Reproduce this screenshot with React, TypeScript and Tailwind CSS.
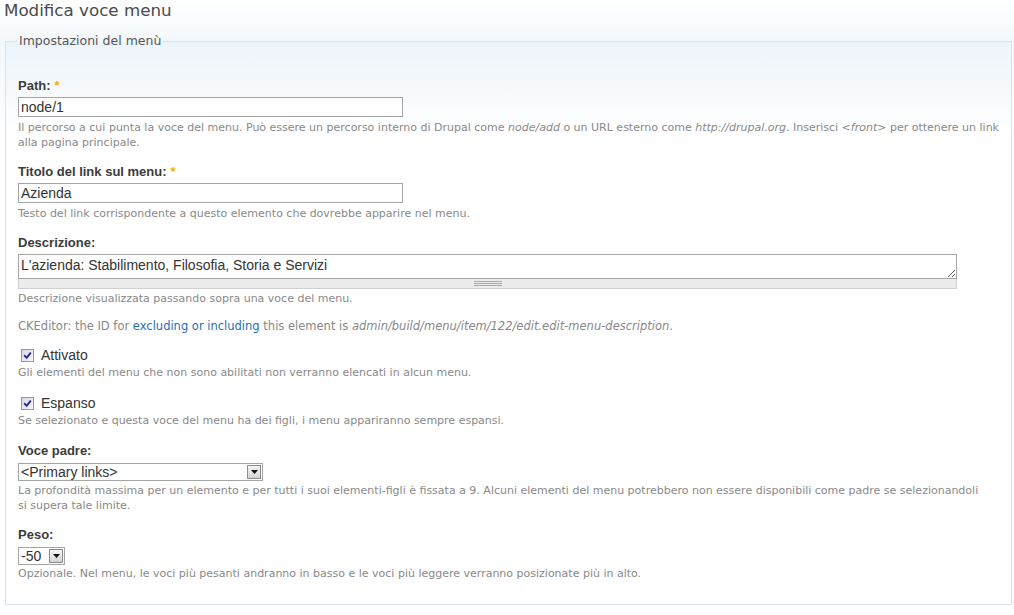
import React from 'react';

const descCls = "font-['DejaVu_Sans',Verdana,sans-serif] text-[11px] leading-[15px] text-[#898989]";
const labelCls = "block font-['Liberation_Sans',Arial,sans-serif] font-bold text-[13px] leading-[16px] text-[#3b3b3b]";
const inputCls =
  "block h-[20px] border border-[#a5a5a5] bg-white px-[2px] font-['Liberation_Sans',Arial,sans-serif] text-[14px] leading-[18px] text-[#333] outline-none";

const Label: React.FC<{ text: string; required?: boolean }> = ({ text, required }) => (
  <label className={labelCls}>
    {text}
    {required && <span className="ml-[4px] text-[#f2b000]">*</span>}
  </label>
);

const Checkbox: React.FC = () => (
  <span className="flex h-[13px] w-[13px] items-center justify-center border border-[#7f9db9] bg-gradient-to-br from-[#d8d9e8] to-[#f9f9fc]">
    <svg width="9" height="9" viewBox="0 0 9 9">
      <path d="M1.2 4.2 L3.6 6.8 L7.8 1.6" stroke="#23239c" strokeWidth="1.8" fill="none" />
    </svg>
  </span>
);

const FakeSelect: React.FC<{ value: string; widthCls: string }> = ({ value, widthCls }) => (
  <div className={`flex h-[18px] items-stretch border border-[#a5a5a5] bg-white ${widthCls}`}>
    <span className="flex-1 overflow-hidden whitespace-nowrap pl-[2px] font-['Liberation_Sans',Arial,sans-serif] text-[14px] leading-[16px] text-[#333]">
      {value}
    </span>
    <span className="m-[1px] flex w-[14px] items-center justify-center border border-[#8c8c8c] bg-gradient-to-b from-[#f6f6f6] to-[#d4d4d4]">
      <svg width="7" height="4" viewBox="0 0 7 4">
        <path d="M0 0h7L3.5 4z" fill="#111" />
      </svg>
    </span>
  </div>
);

export default function App() {
  return (
    <div className="min-h-[615px] w-[1014px] bg-[linear-gradient(to_bottom,#ffffff_0px,#f3f8fc_40px,#ffffff_140px)] pb-[9px]">
      <h1 className="h-[22px] pl-[4px] font-['DejaVu_Sans',Verdana,sans-serif] text-[16.7px] font-normal leading-[20px] text-[#4a4a4a]">
        Modifica voce menu
      </h1>

      <fieldset className="ml-[5px] mt-[12px] w-[1007px] border border-[#d6e4ee] bg-[linear-gradient(to_bottom,#ecf4fa_0px,#ffffff_90px)] pb-[23px] pl-[12px] pr-[4px] pt-[30px]">
        <legend className="ml-[-1px] px-[2px] font-['DejaVu_Sans',Verdana,sans-serif] text-[12.5px] leading-[14px] text-[#555]">
          Impostazioni del menù
        </legend>

        {/* Path */}
        <div>
          <Label text="Path:" required />
          <input readOnly value="node/1" className={`${inputCls} mt-[3px] w-[385px]`} />
          <div className={`${descCls} mt-[3px]`}>
            Il percorso a cui punta la voce del menu. Può essere un percorso interno di Drupal come <em>node/add</em> o
            un URL esterno come <em>http://drupal.org</em>. Inserisci <em>&lt;front&gt;</em> per ottenere un link
            <br />
            alla pagina principale.
          </div>
        </div>

        {/* Titolo */}
        <div className="mt-[14px]">
          <Label text="Titolo del link sul menu:" required />
          <input readOnly value="Azienda" className={`${inputCls} mt-[3px] w-[385px]`} />
          <div className={`${descCls} mt-[3px]`}>
            Testo del link corrispondente a questo elemento che dovrebbe apparire nel menu.
          </div>
        </div>

        {/* Descrizione */}
        <div className="mt-[14px]">
          <Label text="Descrizione:" />
          <div className="mt-[3px] w-[939px]">
            <textarea
              readOnly
              rows={1}
              value="L'azienda: Stabilimento, Filosofia, Storia e Servizi"
              className="block h-[25px] w-full border border-[#a5a5a5] bg-white px-[2px] font-['Liberation_Sans',Arial,sans-serif] text-[14px] leading-[20px] text-[#333] outline-none"
            />
            <div className="flex h-[10px] items-center justify-center border border-t-0 border-[#cfcfcf] bg-[#ececec]">
              <div className="flex w-[28px] flex-col gap-[1px]">
                <span className="h-px bg-[#a8a8a8]" />
                <span className="h-px bg-[#a8a8a8]" />
                <span className="h-px bg-[#a8a8a8]" />
              </div>
            </div>
          </div>
          <div className={`${descCls} mt-[2px]`}>Descrizione visualizzata passando sopra una voce del menu.</div>
        </div>

        <p className="mt-[13px] font-['DejaVu_Sans',Verdana,sans-serif] text-[11.5px] leading-[15px] text-[#888]">
          CKEditor: the ID for{' '}
          <a href="#" className="text-[#2370b0]">
            excluding or including
          </a>{' '}
          this element is <em>admin/build/menu/item/122/edit.edit-menu-description</em>.
        </p>

        {/* Attivato */}
        <div className="mt-[12px]">
          <div className="flex h-[18px] items-center gap-[7px] pl-[3px]">
            <Checkbox />
            <span className="font-['Liberation_Sans',Arial,sans-serif] text-[14px] leading-[18px] text-[#333]">
              Attivato
            </span>
          </div>
          <div className={`${descCls} mt-[1px]`}>
            Gli elementi del menu che non sono abilitati non verranno elencati in alcun menu.
          </div>
        </div>

        {/* Espanso */}
        <div className="mt-[14px]">
          <div className="flex h-[18px] items-center gap-[7px] pl-[3px]">
            <Checkbox />
            <span className="font-['Liberation_Sans',Arial,sans-serif] text-[14px] leading-[18px] text-[#333]">
              Espanso
            </span>
          </div>
          <div className={`${descCls} mt-[1px]`}>
            Se selezionato e questa voce del menu ha dei figli, i menu appariranno sempre espansi.
          </div>
        </div>

        {/* Voce padre */}
        <div className="mt-[15px]">
          <Label text="Voce padre:" />
          <div className="mt-[4px]">
            <FakeSelect value="<Primary links>" widthCls="w-[245px]" />
          </div>
          <div className={`${descCls} mt-[2px]`}>
            La profondità massima per un elemento e per tutti i suoi elementi-figli è fissata a 9. Alcuni elementi del
            menu potrebbero non essere disponibili come padre se selezionandoli
            <br />
            si supera tale limite.
          </div>
        </div>

        {/* Peso */}
        <div className="mt-[14px]">
          <Label text="Peso:" />
          <div className="mt-[4px]">
            <FakeSelect value="-50" widthCls="w-[47px]" />
          </div>
          <div className={`${descCls} mt-[1px]`}>
            Opzionale. Nel menu, le voci più pesanti andranno in basso e le voci più leggere verranno posizionate più in
            alto.
          </div>
        </div>
      </fieldset>
    </div>
  );
}
